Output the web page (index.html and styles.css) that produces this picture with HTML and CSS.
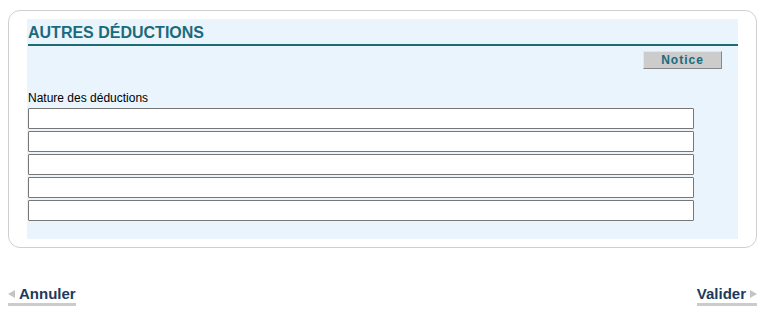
FILE: index.html
```html
<!DOCTYPE html>
<html lang="fr">
<head>
    <meta charset="UTF-8">
    <title>Autres déductions</title>
    <link rel="stylesheet" href="styles.css">
</head>
<body>
    <div class="frame">
        <div class="panel">
            <h2 class="panel-title">AUTRES DÉDUCTIONS</h2>
            <div class="notice-row">
                <button type="button" class="notice">Notice</button>
            </div>
            <label class="field-label">Nature des déductions</label>
            <div class="fields">
                <input type="text" name="nature1">
                <input type="text" name="nature2">
                <input type="text" name="nature3">
                <input type="text" name="nature4">
                <input type="text" name="nature5">
            </div>
        </div>
    </div>

    <div class="nav">
        <a href="#" class="nav-link prev"><span class="arrow left"></span>Annuler</a>
        <a href="#" class="nav-link next">Valider<span class="arrow right"></span></a>
    </div>
</body>
</html>
```

FILE: styles.css
```css
body {
    margin: 8px;
    background-color: #fff;
    font-family: 'Liberation Sans', Arial, sans-serif;
    font-size: 12px;
    color: #000;
}
.frame {
    margin-top: 2px;
    border: 1px solid #cfcfcf;
    border-radius: 12px;
    padding: 8px 18px 8px 18px;
}
.panel {
    background-color: #eaf4fd;
    padding: 0 0 18px 1px;
}
.panel-title {
    margin: 0;
    padding-top: 4px;
    font-size: 16px;
    line-height: 19px;
    font-weight: bold;
    color: #1b6a7b;
    border-bottom: 2px solid #1d6b75;
    padding-bottom: 2px;
}
.notice-row {
    display: flex;
    justify-content: flex-end;
    padding-right: 16px;
    margin-top: 5px;
}
.notice {
    width: 79px;
    height: 18px;
    padding: 0;
    background-color: #cccccc;
    border: 1px solid #e6e6e6;
    border-right-color: #888;
    border-bottom-color: #888;
    font-family: 'Liberation Sans', Arial, sans-serif;
    font-size: 12px;
    font-weight: bold;
    letter-spacing: 1px;
    color: #1b6a7b;
}
.field-label {
    display: block;
    margin-top: 22px;
    line-height: 15px;
    font-size: 12px;
}
.fields {
    display: flex;
    flex-direction: column;
    gap: 2px;
    margin-top: 2px;
}
.fields input {
    width: 666px;
    height: 21px;
    box-sizing: border-box;
    margin: 0;
    border: 1px solid #777;
    border-radius: 1px;
    background-color: #fff;
    font-family: 'Liberation Sans', Arial, sans-serif;
    font-size: 12px;
}
.nav {
    display: flex;
    justify-content: space-between;
    margin-top: 37px;
}
.nav-link {
    display: inline-flex;
    align-items: center;
    gap: 4px;
    font-size: 15px;
    font-weight: bold;
    line-height: 17px;
    color: #1b3a5c;
    text-decoration: none;
    border-bottom: 3px solid #cccccc;
    padding-bottom: 1px;
}
.arrow {
    width: 0;
    height: 0;
    border-top: 4px solid transparent;
    border-bottom: 4px solid transparent;
}
.arrow.left {
    border-right: 7px solid #c4c4c4;
}
.arrow.right {
    border-left: 7px solid #c4c4c4;
}
```
